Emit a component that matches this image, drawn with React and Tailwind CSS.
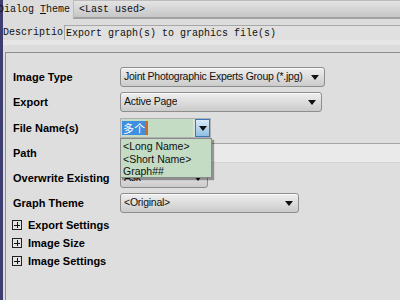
import React from 'react';

const mono = { fontFamily: '"Liberation Mono", "Noto Sans CJK SC", monospace' };

const Arrow = () => (
  <svg width="8" height="5" viewBox="0 0 8 5" className="shrink-0">
    <path d="M0 0 H8 L4 5 Z" fill="#111" />
  </svg>
);

const Select = ({ width, children }) => (
  <div
    className={`${width} h-[20px] flex items-center justify-between pl-[3px] pr-[5px] rounded-[3px] border border-[#8e8e8e] bg-gradient-to-b from-[#efefef] to-[#cbcbcb] text-[10.5px] tracking-[-0.25px] text-[#111] shadow-[inset_0_1px_0_#fafafa]`}
  >
    <span className="whitespace-nowrap overflow-hidden">{children}</span>
    <Arrow />
  </div>
);

const Row = ({ label, className = '', children }) => (
  <div className={`flex items-center h-[20px] ${className}`}>
    <div className="w-[107px] shrink-0 text-[11px] font-bold text-black">{label}</div>
    {children}
  </div>
);

const Expander = ({ label }) => (
  <div className="flex items-center h-[18px]">
    <div className="ml-[-1px] w-[10px] h-[10px] border border-[#222] bg-[#e4e4e4] flex items-center justify-center">
      <svg width="8" height="8" viewBox="0 0 8 8">
        <path d="M1 4 H7 M4 1 V7" stroke="#111" strokeWidth="1" shapeRendering="crispEdges" />
      </svg>
    </div>
    <span className="ml-[6px] text-[11px] font-bold text-black">{label}</span>
  </div>
);

export default function App() {
  return (
    <div
      className="w-[400px] h-[300px] flex overflow-hidden bg-[#dedede]"
      style={{ fontFamily: '"Liberation Sans", Arial, sans-serif' }}
    >
      <div className="w-[3px] shrink-0 bg-[#3d3d70]" />
      <div className="flex-1 flex flex-col min-w-0 bg-[#dcdcdc]">
        {/* dialog theme */}
        <div className="flex items-center h-[19px] text-[10px] text-[#111]" style={mono}>
          <span className="ml-[-5px] w-[75px] shrink-0 whitespace-nowrap">
            Dialog <span className="underline">T</span>heme
          </span>
          <div className="flex-1 h-[19px] flex items-center pl-[5px] border-l border-t border-[#bcbcbc] border-b-2 border-b-[#a2a2a2] bg-gradient-to-b from-[#e4e4e4] to-[#c6c6c6]">
            &lt;Last used&gt;
          </div>
        </div>
        {/* description */}
        <div className="flex items-center h-[15px] mt-[6px] text-[10px] text-[#111]" style={mono}>
          <span className="w-[61px] shrink-0 whitespace-nowrap overflow-hidden">Descriptio</span>
          <div className="flex-1 h-[15px] flex items-center pl-[1px] border-l border-t border-[#a8a8a8] bg-[#e0e0e0]">
            Export graph(s) to graphics file(s)
          </div>
        </div>
        <div className="h-[5px] bg-[#e6e6e6]" />
        {/* main panel */}
        <div className="relative flex-1 mt-[7px] ml-[2px] border-l border-t border-[#8f8f8f] bg-[#dedede] pl-[7px] pt-[14px]">
          <Row label="Image Type">
            <Select width="w-[205px]">Joint Photographic Experts Group (*.jpg)</Select>
          </Row>
          <Row label="Export" className="mt-[5px]">
            <Select width="w-[202px]">Active Page</Select>
          </Row>
          <Row label="File Name(s)" className="mt-[6px]">
            <div className="w-[91px] h-[20px] flex items-center border border-[#b0b0b0]">
              <div className="flex-1 h-full flex items-center bg-[#c3dcc3] pl-[1px] border-r-2 border-[#dedede]">
                <span
                  className="bg-[#3e8fe0] text-white text-[11px] leading-[14px] px-[1px]"
                  style={{ fontFamily: '"Noto Sans CJK SC", sans-serif' }}
                >
                  多个
                </span>
                <span className="w-[2px] h-[14px] bg-[#d2691e]" />
              </div>
              <div className="w-[15px] h-full flex items-center justify-center border border-[#3a78b5] bg-gradient-to-b from-[#d9ebf8] to-[#8fbfe3]">
                <Arrow />
              </div>
            </div>
          </Row>
          <Row label="Path" className="mt-[5px]">
            <div className="flex-1 h-[20px] border-t border-[#a4a4a4] border-b border-b-[#d2d2d2] bg-[#eaeaea]" />
          </Row>
          <Row label="Overwrite Existing" className="mt-[5px]">
            <Select width="w-[88px]">Ask</Select>
          </Row>
          <Row label="Graph Theme" className="mt-[5px]">
            <Select width="w-[179px]">&lt;Original&gt;</Select>
          </Row>
          <div className="mt-[3px] flex flex-col">
            <Expander label="Export Settings" />
            <Expander label="Image Size" />
            <Expander label="Image Settings" />
          </div>

          {/* open file name list */}
          <div className="absolute left-[114px] top-[85px] w-[92px] h-[40px] bg-[#c3dcc3] border border-[#8a8a8a] shadow-[2px_2px_1px_rgba(0,0,0,0.35)] pl-[2px] pt-[1px] text-[10.5px] leading-[12.5px] text-[#111]">
            <div>&lt;Long Name&gt;</div>
            <div>&lt;Short Name&gt;</div>
            <div>Graph##</div>
          </div>
        </div>
      </div>
    </div>
  );
}
